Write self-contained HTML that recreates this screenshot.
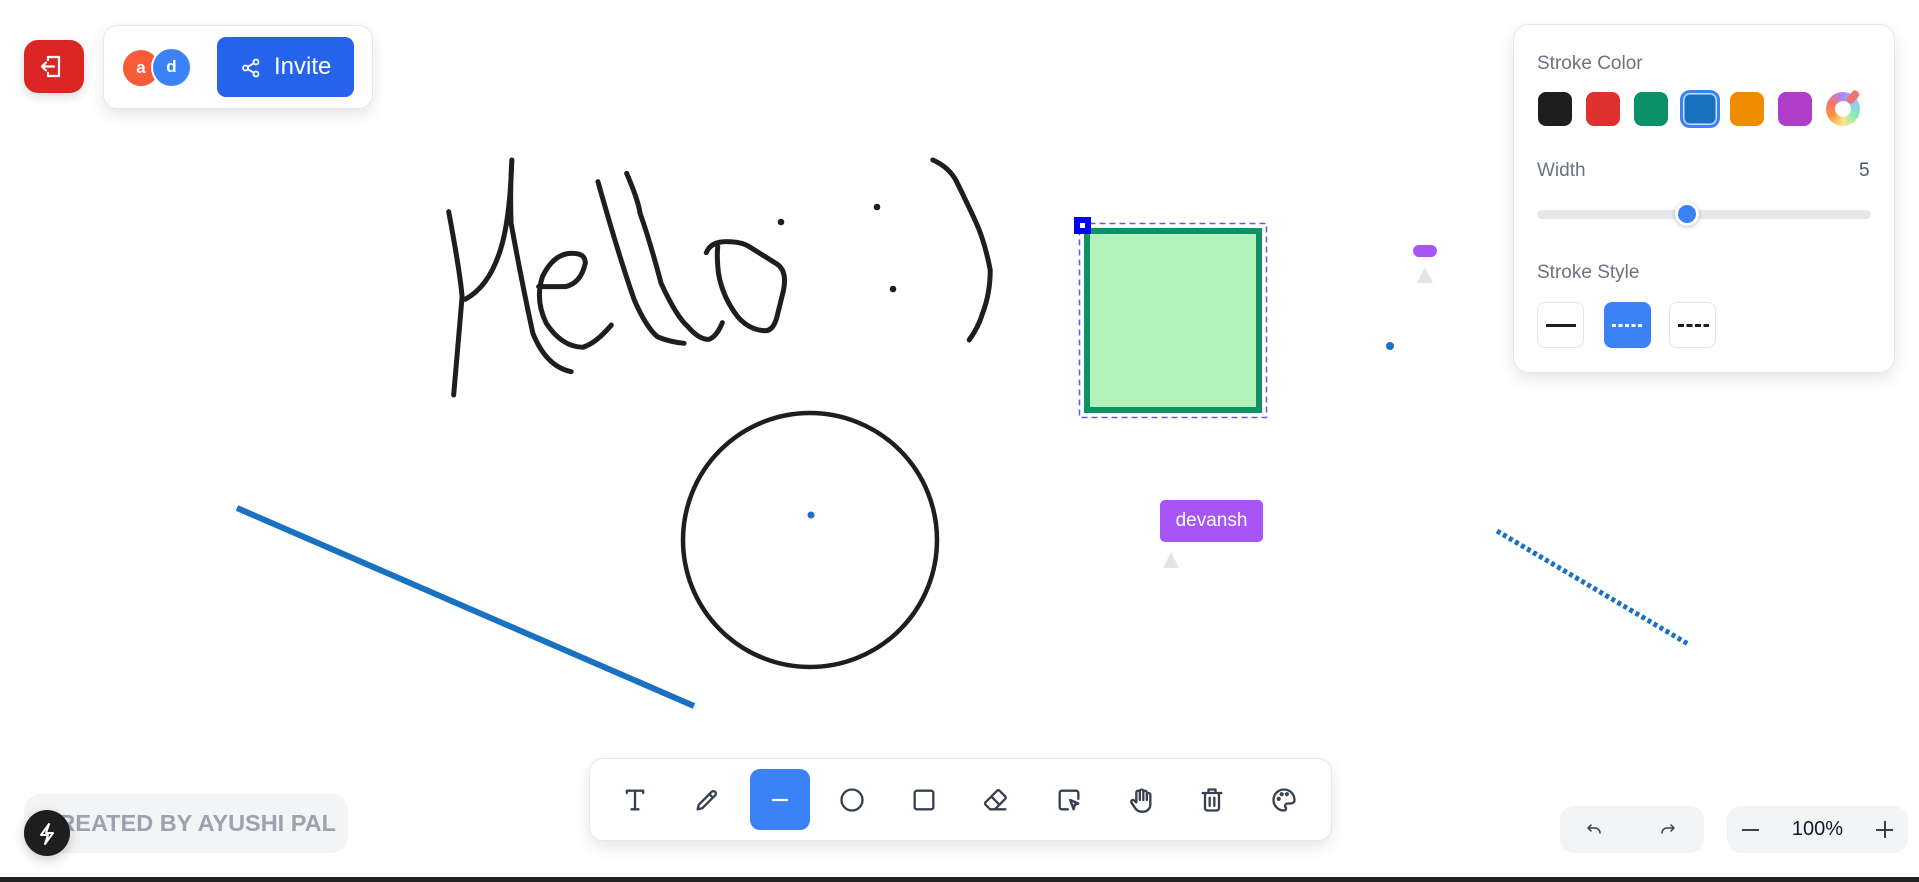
<!DOCTYPE html>
<html><head><meta charset="utf-8"><style>
*{margin:0;padding:0;box-sizing:border-box}
body{width:1919px;height:882px;overflow:hidden;background:#fff;font-family:"Liberation Sans",Arial,sans-serif;position:relative}
.abs{position:absolute}
.card{background:#fff;border:1px solid #e5e7eb;box-shadow:0 6px 16px rgba(0,0,0,.1)}
.sw{position:absolute;top:92px;width:34px;height:34px;border-radius:8px}
.sb{position:absolute;top:302px;width:47px;height:46px;border-radius:8px;border:1px solid #e5e7eb;background:#fff}
.tb{position:absolute;top:769px;width:60px;height:61px;display:flex;align-items:center;justify-content:center}
.tb svg{width:28px;height:28px;fill:none;stroke:#374151;stroke-width:2;stroke-linecap:round;stroke-linejoin:round}
</style></head><body>

<svg class="abs" style="left:0;top:0" width="1919" height="882">
 <g transform="translate(420,140) scale(0.3827,0.3333)" fill="none" stroke="#1e1e1e" stroke-width="5" stroke-linecap="round" stroke-linejoin="round">
  <path vector-effect="non-scaling-stroke" d="M75,215 Q105,400 110,470 Q100,600 88,765"/>
  <path vector-effect="non-scaling-stroke" d="M118,478 Q180,440 210,330 Q235,240 240,60 Q235,150 238,250 Q270,450 295,580 Q330,680 395,695"/>
  <path vector-effect="non-scaling-stroke" d="M310,440 L380,440 Q420,430 432,370 Q432,340 400,340 Q350,338 320,410 Q300,480 330,550 Q370,620 425,622 Q460,610 500,555"/>
  <path vector-effect="non-scaling-stroke" d="M465,125 Q520,350 560,480 Q590,560 620,590 Q650,605 690,610"/>
  <path vector-effect="non-scaling-stroke" d="M540,100 Q570,180 575,220 Q600,300 630,430 Q670,530 700,560 Q730,600 755,598 Q775,590 790,548"/>
  <path vector-effect="non-scaling-stroke" d="M748,338 Q760,305 800,305 Q840,305 860,320 L930,370 Q960,390 950,450 L935,520 Q925,575 900,572 Q860,570 830,530 Q790,470 780,400 Q775,350 778,320"/>
  <path vector-effect="non-scaling-stroke" d="M1340,60 Q1380,80 1400,120 Q1430,190 1450,240 Q1475,300 1490,390 Q1490,460 1470,520 Q1460,560 1435,600"/>
 </g>
 <circle cx="781" cy="222" r="3.3" fill="#1e1e1e"/>
 <circle cx="877" cy="207" r="3.3" fill="#1e1e1e"/>
 <circle cx="893" cy="289" r="3.3" fill="#1e1e1e"/>
 <circle cx="810" cy="540" r="127" fill="none" stroke="#1e1e1e" stroke-width="4.5"/>
 <circle cx="811" cy="515" r="3.5" fill="#1971c2"/>
 <line x1="237" y1="508" x2="694" y2="706" stroke="#1971c2" stroke-width="6"/>
 <line x1="1497" y1="531" x2="1688" y2="644" stroke="#1971c2" stroke-width="5" stroke-dasharray="4 3"/>
 <rect x="1087" y="231" width="172" height="179" fill="#b2f2bb" stroke="#0d9165" stroke-width="6"/>
 <rect x="1079.5" y="223.5" width="187" height="194" fill="none" stroke="#5b5bf0" stroke-width="1.5" stroke-dasharray="6 4"/>
 <rect x="1074" y="217" width="17" height="17" fill="#0000ff"/>
 <rect x="1080" y="223" width="5" height="5" fill="#fff"/>
 <rect x="1413" y="245" width="24" height="12" rx="6" fill="#a855f7"/>
 <polygon points="1417,283 1425,267 1433,283" fill="#e5e5e5"/>
 <circle cx="1390" cy="346" r="4" fill="#1971c2"/>
 <polygon points="1163,568 1171,552 1179,568" fill="#e5e5e5"/>
</svg>
<div class="abs" style="left:1160px;top:500px;width:103px;height:42px;background:#a855f7;border-radius:5px;color:#fff;font-size:19px;line-height:42px;text-align:center">devansh</div>

<!-- top left -->
<div class="abs" style="left:24px;top:40px;width:60px;height:53px;background:#dc2626;border-radius:14px;box-shadow:0 4px 10px rgba(0,0,0,.15)">
 <svg width="60" height="53" viewBox="0 0 60 53" fill="none" stroke="#fff" stroke-width="2.2" stroke-linecap="round" stroke-linejoin="round"><path d="M24 17h11v19H24"/><path d="M24 17v3M24 36v-3"/><path d="M30 26.5H18M22 22.5l-4 4 4 4"/></svg>
</div>
<div class="abs card" style="left:103px;top:25px;width:270px;height:84px;border-radius:14px"></div>
<div class="abs" style="left:121px;top:48px;width:40px;height:40px;border-radius:50%;background:#f95b38;border:2px solid #fff;color:#fff;font-weight:bold;font-size:17px;text-align:center;line-height:36px">a</div>
<div class="abs" style="left:151px;top:47px;width:41px;height:41px;border-radius:50%;background:#3b82f6;border:2px solid #fff;color:#fff;font-weight:bold;font-size:17px;text-align:center;line-height:36px">d</div>
<div class="abs" style="left:217px;top:37px;width:137px;height:60px;background:#2563eb;border-radius:9px;color:#fff;font-size:24px;line-height:60px">
 <svg class="abs" style="left:24px;top:21px" width="20" height="20" viewBox="0 0 20 20" fill="none" stroke="#fff" stroke-width="1.8"><circle cx="15" cy="4" r="2.5"/><circle cx="4.5" cy="10" r="2.5"/><circle cx="15" cy="16" r="2.5"/><path d="M7 8.7l5.8-3.4M7 11.3l5.8 3.4"/></svg>
 <span class="abs" style="left:57px;top:0">Invite</span>
</div>

<!-- right panel -->
<div class="abs card" style="left:1513px;top:24px;width:382px;height:349px;border-radius:16px">
 <div class="abs" style="left:23px;top:28px;font-size:19px;color:#6b7280">Stroke Color</div>
</div>
<div class="sw" style="left:1538px;background:#1e1e1e"></div>
<div class="sw" style="left:1586px;background:#e03131"></div>
<div class="sw" style="left:1634px;background:#0c9065"></div>
<div class="sw" style="left:1680px;top:90px;width:40px;height:38px;background:#1971c2;border:3px solid #3b82f6;box-shadow:inset 0 0 0 1.5px #cfe0fb;border-radius:10px"></div>
<div class="sw" style="left:1730px;background:#f08c00"></div>
<div class="sw" style="left:1778px;background:#ae3ec9"></div>
<div class="sw" style="left:1826px;border-radius:50%;background:conic-gradient(#a78bfa,#93c5fd,#86efac,#fde68a,#fb923c,#f87171,#a78bfa);"></div>
<div class="abs" style="left:1835px;top:101px;width:16px;height:16px;border-radius:50%;background:#fff"></div>
<div class="abs" style="left:1849px;top:90px;width:8px;height:14px;background:#f87171;border-radius:3px;transform:rotate(40deg)"></div>
<div class="abs" style="left:1537px;top:160px;font-size:19px;color:#6b7280">Width</div>
<div class="abs" style="left:1859px;top:160px;font-size:19px;color:#4b5563">5</div>
<div class="abs" style="left:1537px;top:210px;width:334px;height:9px;border-radius:5px;background:#e5e7eb"></div>
<div class="abs" style="left:1675px;top:202px;width:24px;height:24px;border-radius:50%;background:#3b82f6;border:3px solid #fff;box-shadow:0 1px 4px rgba(0,0,0,.25)"></div>
<div class="abs" style="left:1537px;top:262px;font-size:19px;color:#6b7280">Stroke Style</div>
<div class="sb" style="left:1537px"><div class="abs" style="left:8px;top:21px;width:30px;height:3px;background:#1e1e1e"></div></div>
<div class="sb" style="left:1604px;background:#3b82f6;border-color:#3b82f6"><div class="abs" style="left:7px;top:21px;width:31px;height:3px;background:repeating-linear-gradient(90deg,#fff 0 4px,transparent 4px 6.5px)"></div></div>
<div class="sb" style="left:1669px"><div class="abs" style="left:8px;top:21px;width:31px;height:3px;background:repeating-linear-gradient(90deg,#1e1e1e 0 6px,transparent 6px 8.5px)"></div></div>

<!-- bottom toolbar -->
<div class="abs card" style="left:589px;top:758px;width:743px;height:83px;border-radius:14px"></div>
<div class="tb" style="left:605px"><svg viewBox="0 0 24 24"><path d="M5 6V4h14v2M12 4v16M9 20h6"/></svg></div>
<div class="tb" style="left:677px"><svg viewBox="0 0 24 24"><path d="M4 20l1-4L16 5a2 2 0 0 1 3 3L8 19z M14 7l3 3"/></svg></div>
<div class="tb" style="left:750px;background:#3b82f6;border-radius:10px"><svg viewBox="0 0 24 24" style="stroke:#fff"><path d="M6 12h12"/></svg></div>
<div class="tb" style="left:822px"><svg viewBox="0 0 24 24"><circle cx="12" cy="12" r="9"/></svg></div>
<div class="tb" style="left:894px"><svg viewBox="0 0 24 24"><rect x="4" y="4" width="16" height="16" rx="2"/></svg></div>
<div class="tb" style="left:966px"><svg viewBox="0 0 24 24"><path d="M7 20l-4-4a1.5 1.5 0 0 1 0-2L13 4a1.5 1.5 0 0 1 2 0l5 5a1.5 1.5 0 0 1 0 2L11 20zM8 9l7 7M7 20h13"/></svg></div>
<div class="tb" style="left:1039px"><svg viewBox="0 0 24 24"><path d="M11 20H6a2 2 0 0 1-2-2V6a2 2 0 0 1 2-2h12a2 2 0 0 1 2 2v5"/><path d="M13 12l7 3-3 1-1 4z"/></svg></div>
<div class="tb" style="left:1111px"><svg viewBox="0 0 24 24"><path d="M8 13V5.5a1.5 1.5 0 0 1 3 0V12M11 11.5v-7a1.5 1.5 0 0 1 3 0V12M14 5.5a1.5 1.5 0 0 1 3 0V12M17 7.5a1.5 1.5 0 0 1 3 0V16a6 6 0 0 1-6 6h-2a7 7 0 0 1-5-3l-3-4.5a1.5 1.5 0 0 1 2.3-2L8 14"/></svg></div>
<div class="tb" style="left:1182px"><svg viewBox="0 0 24 24"><path d="M4 6h16M6 6v13a2 2 0 0 0 2 2h8a2 2 0 0 0 2-2V6M9 6V3h6v3M10 10v7M14 10v7"/></svg></div>
<div class="tb" style="left:1254px"><svg viewBox="0 0 24 24"><path d="M12 21a9 9 0 1 1 9-9c0 2-1.5 3-3.5 3H15a2 2 0 0 0-1.5 3.3c.6.7.2 2.7-1.5 2.7z"/><circle cx="7.5" cy="11" r=".8"/><circle cx="10" cy="7" r=".8"/><circle cx="14.5" cy="7" r=".8"/></svg></div>

<!-- bottom left -->
<div class="abs" style="left:24px;top:794px;width:324px;height:59px;border-radius:16px;background:#f3f4f6"></div>
<div class="abs" style="left:0;top:794px;width:336px;height:59px;line-height:59px;text-align:right;font-size:23.5px;font-weight:bold;color:#9ca3af;overflow:hidden;white-space:nowrap">CREATED BY AYUSHI PAL</div>
<div class="abs" style="left:24px;top:810px;width:46px;height:46px;border-radius:50%;background:#1e1e1e;box-shadow:0 4px 12px rgba(0,0,0,.2)">
 <svg width="46" height="46" viewBox="0 0 46 46" fill="none" stroke="#fff" stroke-width="2" stroke-linejoin="round"><path d="M25 14l-8 11h7l-3 9 8-11h-7z"/></svg>
</div>

<!-- bottom right -->
<div class="abs" style="left:1560px;top:806px;width:144px;height:47px;border-radius:14px;background:#f3f4f6"></div>
<svg class="abs" style="left:1584px;top:820px" width="20" height="20" viewBox="0 0 20 20" fill="none" stroke="#374151" stroke-width="1.5" stroke-linecap="round"><path d="M4 7h7a5 5 0 0 1 5 5M4 7l3-3M4 7l3 3" transform="translate(0,1)"/></svg>
<svg class="abs" style="left:1658px;top:820px" width="20" height="20" viewBox="0 0 20 20" fill="none" stroke="#374151" stroke-width="1.5" stroke-linecap="round"><path d="M16 8H9a5 5 0 0 0-5 5M16 8l-3-3M16 8l-3 3"/></svg>
<div class="abs" style="left:1727px;top:806px;width:181px;height:47px;border-radius:14px;background:#f3f4f6"></div>
<div class="abs" style="left:1742px;top:829px;width:17px;height:1.5px;background:#374151"></div>
<div class="abs" style="left:1727px;top:806px;width:181px;height:47px;line-height:47px;text-align:center;font-size:20px;color:#111827">100%</div>
<div class="abs" style="left:1876px;top:829px;width:17px;height:1.5px;background:#374151"></div>
<div class="abs" style="left:1884px;top:821px;width:1.5px;height:17px;background:#374151"></div>

<div class="abs" style="left:0;top:877px;width:1919px;height:5px;background:#222"></div>
</body></html>
